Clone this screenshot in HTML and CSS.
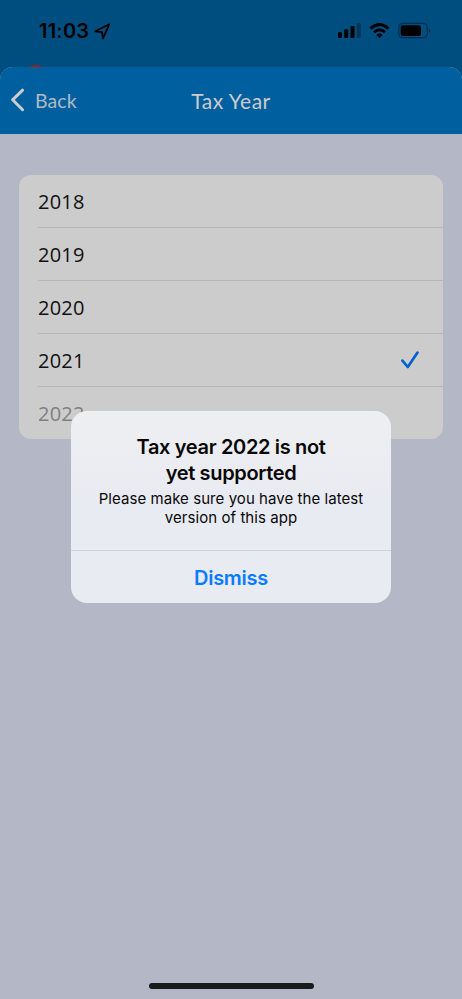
FILE: index.html
```html
<!DOCTYPE html>
<html lang="en">
<head>
<meta charset="utf-8">
<meta name="viewport" content="width=device-width">
<title>Tax Year</title>
<link rel="stylesheet" href="styles.css">
</head>
<body>
<div class="screen">
  <header class="status">
    <div class="clock">
      <span class="time">11:03</span>
      <svg width="17" height="17" viewBox="0 0 17 17"><path d="M1.2 8.3 15.2 1.4 9 15.4 8 9.2Z" fill="none" stroke="#000" stroke-width="1.8" stroke-linejoin="round"/></svg>
    </div>
    <svg class="indicators" width="96" height="18" viewBox="336 22 96 18">
      <rect x="338" y="32.3" width="4" height="5.7" rx="1"/>
      <rect x="344.2" y="29.2" width="4" height="8.8" rx="1"/>
      <rect x="350.5" y="26" width="4" height="12" rx="1"/>
      <rect x="356.8" y="23" width="4" height="15" rx="1" opacity=".3"/>
      <g fill="none" stroke="#000" stroke-width="2.8">
        <path d="M370.5 28.6Q379.5 20.4 388.5 28.6"/>
        <path d="M374 32.3Q379.5 27.2 385 32.3"/>
      </g>
      <path d="M376.3 35Q379.5 32.2 382.7 35L379.5 38Z"/>
      <rect x="398.8" y="23.3" width="28.6" height="14.4" rx="4.2" fill="none" stroke="#000" stroke-opacity=".4" stroke-width="1.2"/>
      <rect x="400.7" y="25.2" width="20.3" height="10.8" rx="2.3"/>
      <path d="M429 28.2Q431.6 30.5 429 32.8Z" opacity=".5"/>
    </svg>
    <span class="peek"></span>
  </header>
  <main class="sheet">
    <nav class="nav">
      <a class="back">
        <svg width="15" height="24" viewBox="0 0 15 24"><path d="M12.6 2.2 2.6 11.8l10 9.9" fill="none" stroke="#ccc" stroke-width="3" stroke-linecap="round" stroke-linejoin="round"/></svg>
        <span>Back</span>
      </a>
      <h1 class="title">Tax Year</h1>
    </nav>
    <ul class="years">
      <li>2018</li>
      <li>2019</li>
      <li>2020</li>
      <li>2021
        <svg class="check" width="20" height="20" viewBox="0 0 20 20"><path d="M2.4 10.6 7.8 17 17.5 2.6" fill="none" stroke="#0062cc" stroke-width="2.7" stroke-linecap="round" stroke-linejoin="round"/></svg>
      </li>
      <li class="disabled">2022</li>
    </ul>
    <div class="home"></div>
  </main>
  <section class="alert" role="alertdialog">
    <div class="message">
      <h2>Tax year 2022 is not<br>yet supported</h2>
      <p>Please make sure you have the latest<br>version of this app</p>
    </div>
    <button>Dismiss</button>
  </section>
</div>
</body>
</html>
```
FILE: styles.css
```css
* { box-sizing: border-box; }
body { margin: 0; font-family: Inter, "Liberation Sans", sans-serif; }
h1, h2, p, ul { margin: 0; padding: 0; }
.screen {
  position: relative;
  width: 462px;
  height: 999px;
  overflow: hidden;
  display: flex;
  flex-direction: column;
  background: #004d80;
}
.status {
  position: relative;
  height: 67px;
  flex: none;
  display: flex;
  justify-content: space-between;
  padding: 22px 30px 0 39px;
}
.clock { display: flex; height: 18px; align-items: center; gap: 5px; }
.time { font-size: 20px; font-weight: 600; letter-spacing: 0.2px; }
.peek {
  position: absolute;
  left: 26px;
  top: 65px;
  width: 19px;
  height: 12px;
  border-radius: 50%;
  background: #a51c10;
}
.sheet {
  position: relative;
  flex: 1;
  display: flex;
  flex-direction: column;
  background: #b4b8c6;
  border-radius: 13px 13px 0 0;
  overflow: hidden;
}
.nav {
  height: 67px;
  flex: none;
  display: grid;
  grid-template-columns: 1fr auto 1fr;
  align-items: center;
  padding: 0 10px 1px;
  background: #005f9e;
  color: #ccc;
  font-family: Lato, sans-serif;
}
.back { display: flex; align-items: center; gap: 10px; font-size: 19.5px; letter-spacing: 0.1px; }
.back span { opacity: .85; }
.title { font-size: 21px; font-weight: 400; letter-spacing: 0.5px; }
.years {
  margin: 41px 19px 0;
  height: 264px;
  border-radius: 12px;
  background: #ccc;
  list-style: none;
  padding-left: 19px;
  font-family: "Open Sans", sans-serif;
  font-size: 20px;
  letter-spacing: 0.2px;
  color: #111;
}
.years li {
  height: 53px;
  display: flex;
  align-items: center;
  justify-content: space-between;
  padding-right: 23px;
  border-bottom: 1px solid #b6b6b8;
}
.years li:last-child { height: 52px; border: 0; }
.years .disabled { color: #808080; }
.home {
  width: 165px;
  height: 6px;
  margin: auto auto 10px;
  border-radius: 3px;
  background: #191b1a;
}
.alert {
  position: absolute;
  left: 71px;
  top: 411px;
  width: 320px;
  height: 192px;
  border-radius: 16px;
  display: flex;
  flex-direction: column;
  overflow: hidden;
  background: linear-gradient(#eeeff1, #e9ebf2 45%, #e9ebf3);
  text-align: center;
  color: #080808;
}
.message { height: 140px; flex: none; padding-top: 23px; border-bottom: 1px solid #cfd2dc; }
h2 { font-size: 20px; line-height: 26px; font-weight: 600; letter-spacing: -0.35px; }
p { font-size: 15px; line-height: 19px; letter-spacing: 0.06px; margin-top: 3px; }
button {
  flex: 1;
  border: 0;
  background: none;
  padding: 2px 0 0;
  font: 600 20px Inter, sans-serif;
  letter-spacing: -0.3px;
  color: #087bff;
}
```
